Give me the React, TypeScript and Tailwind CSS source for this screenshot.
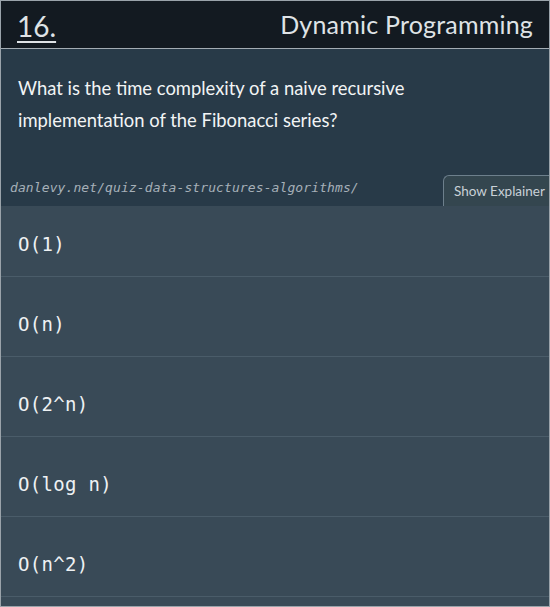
import React from "react";

const options = ["O(1)", "O(n)", "O(2^n)", "O(log n)", "O(n^2)"];

export default function App() {
  return (
    <div
      className="w-[550px] h-[607px] border border-[#9aa3aa] bg-[#394a57] flex flex-col overflow-hidden"
      style={{ fontFamily: "Lato, 'Open Sans', sans-serif" }}
    >
      <div className="h-[48px] shrink-0 bg-[#131a21] border-b border-[#a3acb3] flex items-center justify-between pl-[16px] pr-[16px]">
        <span className="text-[28px] text-[#dfe3e6] underline decoration-2 underline-offset-[4px] leading-none mt-[2px]">
          16.
        </span>
        <span className="text-[25px] text-[#dfe3e6] leading-none tracking-[0.2px]">
          Dynamic Programming
        </span>
      </div>
      <div className="h-[157px] shrink-0 bg-[#283a48] flex flex-col">
        <p className="pl-[17px] pr-[120px] pt-[23px] text-[18.4px] leading-[32px] text-[#f2f4f5]">
          What is the time complexity of a naive recursive implementation of the Fibonacci series?
        </p>
        <div className="mt-auto flex items-end justify-between">
          <span
            className="pl-[9px] pb-[9px] text-[13px] italic text-[#a6b0b8] tracking-[0.1px]"
            style={{ fontFamily: "'DejaVu Sans Mono', monospace" }}
          >
            danlevy.net/quiz-data-structures-algorithms/
          </span>
          <button className="w-[106px] h-[31px] bg-[#34464f] border-l border-t border-[#6d7f8c] rounded-tl-[6px] text-[13.5px] text-[#c9d1d7] pl-[10px] text-left pt-[1px] whitespace-nowrap">
            Show Explainer
          </button>
        </div>
      </div>
      <div className="flex flex-col">
        {options.map((o, i) => (
          <div
            key={o}
            className={`${i === 0 ? "h-[71px]" : "h-[80px]"} border-b border-[#4a5c69] flex items-end pb-[20px] pl-[17px]`}
          >
            <span
              className="text-[19px] leading-[24px] text-[#eef1f3] tracking-[0.3px]"
              style={{ fontFamily: "'DejaVu Sans Mono', monospace" }}
            >
              {o}
            </span>
          </div>
        ))}
      </div>
    </div>
  );
}
